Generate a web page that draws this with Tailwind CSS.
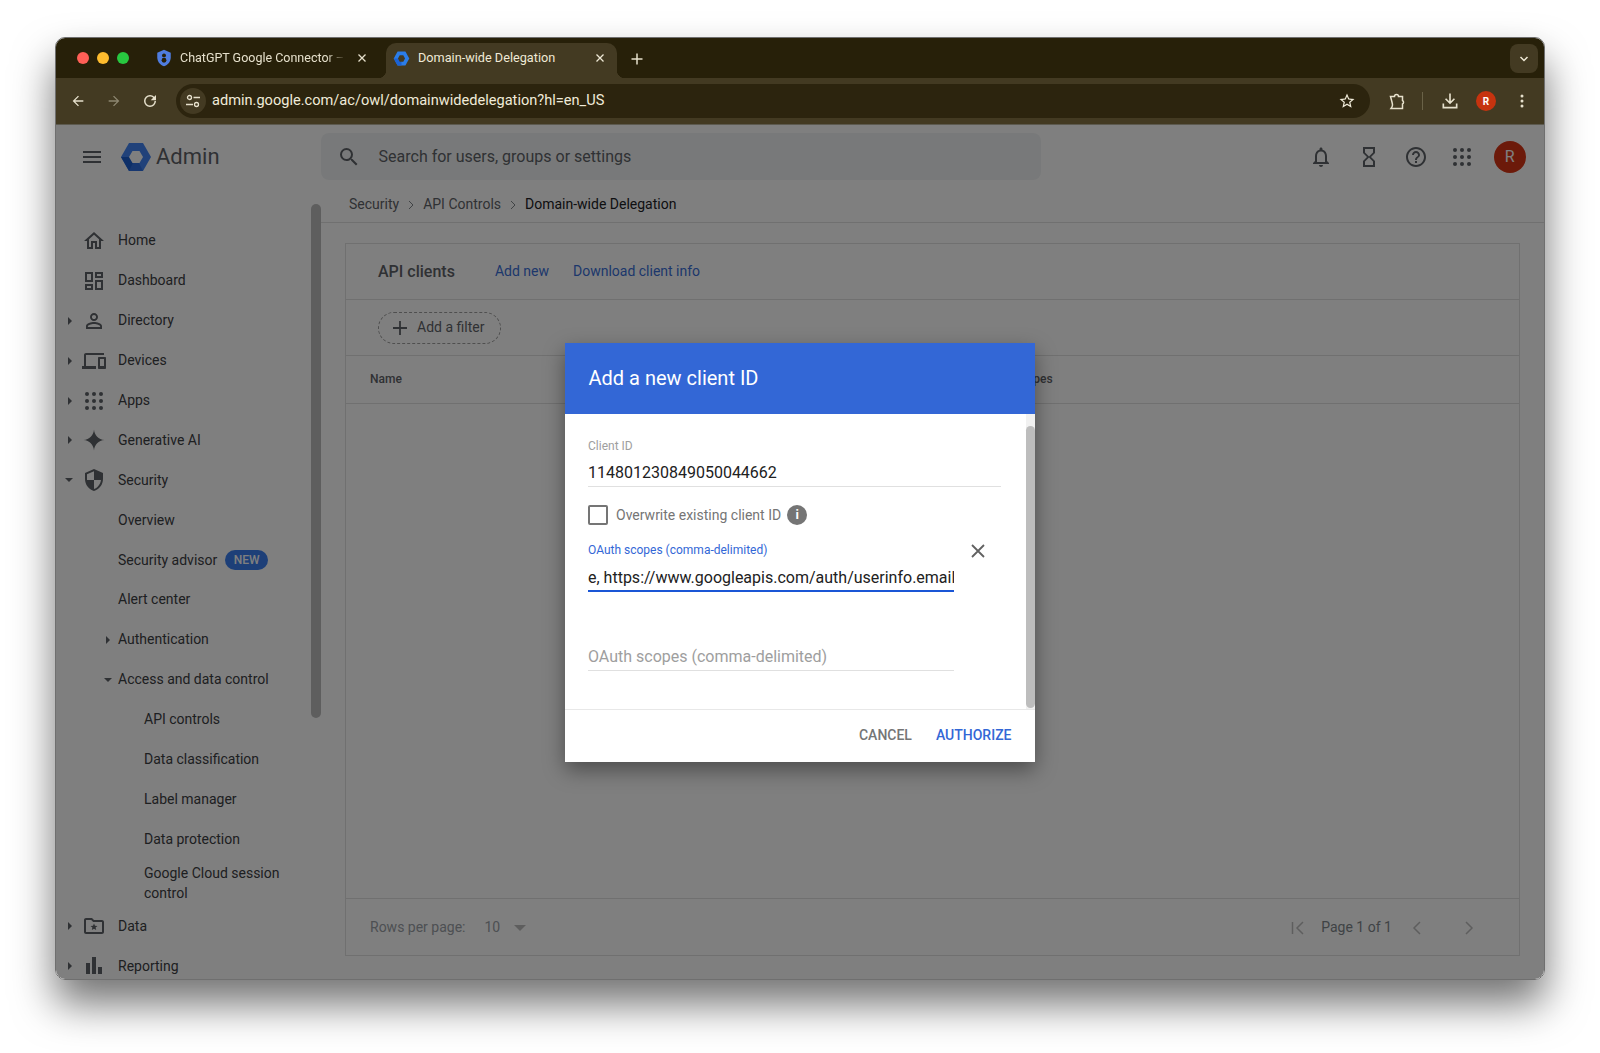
<!DOCTYPE html>
<html lang="en">
<head>
  <meta charset="UTF-8" />
  <title>Domain-wide Delegation</title>
  <script src="https://cdn.jsdelivr.net/npm/@tailwindcss/browser@4"></script>
</head>
<body class="bg-white font-['Roboto',sans-serif] h-[1053px] overflow-hidden">

  <!-- Browser window -->
  <div class="absolute left-[55px] top-[37px] w-[1490px] h-[943px] rounded-[10px] shadow-[0_24px_42px_rgba(0,0,0,0.55)]"></div>
  <div class="relative ml-[55px] mt-[37px] w-[1490px] h-[943px] rounded-[10px] overflow-hidden flex flex-col border border-[#6f6f6f]">

    <!-- Tab strip -->
    <div class="h-[40px] shrink-0 bg-[#272009] flex items-end pl-[20px] text-[12.5px] text-[#e6e0cc]">
      <div class="flex gap-[8px] items-center h-[35px] pb-[6px] w-[54px]">
        <span class="w-[12px] h-[12px] rounded-full bg-[#ff5f57] shrink-0 ml-[1px]"></span>
        <span class="w-[12px] h-[12px] rounded-full bg-[#febc2e] shrink-0"></span>
        <span class="w-[12px] h-[12px] rounded-full bg-[#28c840] shrink-0"></span>
      </div>
      <div class="flex items-center h-[35px] w-[256px] pl-[25px] pb-[5px]">
        <svg class="w-[18px] h-[18px] shrink-0" viewBox="0 0 24 24"><path fill="#4f7de0" d="M12 1L3 5v6c0 5.550 3.840 10.740 9 12 5.160-1.260 9-6.450 9-12V5l-9-4z"/><circle cx="12" cy="8.500" r="2.600" fill="#272009"/><circle cx="12" cy="15" r="3.200" fill="#272009"/></svg>
        <span class="ml-[7px] w-[166px] whitespace-nowrap [mask-image:linear-gradient(90deg,#000_88%,transparent)]">ChatGPT Google Connector –</span>
        <svg class="ml-[10px] w-[12px] h-[12px] shrink-0" viewBox="0 0 12 12"><path d="M2.500 2.500l7 7M9.500 2.500l-7 7" stroke="#e6e0cc" stroke-width="1.300"/></svg>
      </div>
      <div class="relative flex items-center h-[35px] w-[231px] pl-[7px] pb-[5px] bg-[#433a22] rounded-t-[10px]">
        <span class="absolute -left-[8px] bottom-0 w-[8px] h-[8px] bg-[radial-gradient(circle_at_0_0,transparent_8px,#433a22_8.500px)]"></span>
        <span class="absolute -right-[8px] bottom-0 w-[8px] h-[8px] bg-[radial-gradient(circle_at_100%_0,transparent_8px,#433a22_8.500px)]"></span>
        <svg class="w-[17px] h-[17px] shrink-0" viewBox="0 0 24 24"><path fill="#2b7de9" d="M6.500 2h11L23 12l-5.500 10h-11L1 12z"/><path fill="#1a62d6" d="M1 12l5.500 10h5.500v-5l-4-5z"/><path fill="#433a22" d="M9.500 7.500h5l2.500 4.500-2.500 4.500h-5L7 12z"/></svg>
        <span class="ml-[8px] w-[175px] whitespace-nowrap text-[#efe9d6] text-[12.700px]">Domain-wide Delegation</span>
        <svg class="ml-[1px] w-[12px] h-[12px] shrink-0" viewBox="0 0 12 12"><path d="M2.500 2.500l7 7M9.500 2.500l-7 7" stroke="#efe9d6" stroke-width="1.300"/></svg>
      </div>
      <svg class="ml-[13px] mb-[12px] w-[14px] h-[14px] shrink-0" viewBox="0 0 14 14"><path d="M7 1.500v11M1.500 7h11" stroke="#e6e0cc" stroke-width="1.500"/></svg>
      <div class="ml-auto mr-[6px] mb-[5px] w-[28px] h-[29px] rounded-[8px] bg-[#433a22] flex items-center justify-center">
        <svg class="w-[10px] h-[10px]" viewBox="0 0 10 10"><path d="M1.500 3l3.500 3.500L8.500 3" fill="none" stroke="#efe9d6" stroke-width="1.500"/></svg>
      </div>
    </div>

    <!-- Toolbar -->
    <div class="h-[47px] shrink-0 bg-[#433a22] border-b border-[#5d5a4f] flex items-center pl-[14px] text-[#e6e0cc]">
      <svg class="w-[16px] h-[16px]" viewBox="0 0 24 24"><path fill="#e6e0cc" d="M20 11H7.830l5.590-5.590L12 4l-8 8 8 8 1.410-1.410L7.830 13H20v-2z"/></svg>
      <svg class="ml-[20px] w-[16px] h-[16px]" viewBox="0 0 24 24"><path fill="#8d8670" d="M4 11h12.170l-5.590-5.590L12 4l8 8-8 8-1.410-1.410L16.170 13H4v-2z"/></svg>
      <svg class="ml-[19px] w-[18px] h-[18px]" viewBox="0 0 24 24"><path fill="#e6e0cc" d="M17.650 6.350A7.960 7.960 0 0012 4a8 8 0 108 8h-2a6 6 0 11-6-6c1.660 0 3.140.69 4.220 1.780L13 11h7V4l-2.350 2.350z"/></svg>
      <div class="ml-[17px] w-[1194px] h-[34px] rounded-full bg-[#2c240e] flex items-center pl-[4px] pr-[14px]">
        <div class="w-[26px] h-[26px] rounded-full bg-[#433a22] flex items-center justify-center">
          <svg class="w-[16px] h-[16px]" viewBox="0 0 16 16" fill="none" stroke="#e6e0cc" stroke-width="1.300"><circle cx="4.500" cy="4.500" r="2"/><path d="M8.500 4.500H15M1 11.500h7"/><circle cx="11.500" cy="11.500" r="2"/></svg>
        </div>
        <span class="ml-[6px] text-[14.600px] text-[#f0ebd9] whitespace-nowrap">admin.google.com/ac/owl/domainwidedelegation?hl=en_US</span>
        <svg class="ml-auto w-[18px] h-[18px]" viewBox="0 0 24 24"><path fill="#f0ebd9" d="M22 9.240l-7.190-.62L12 2 9.190 8.630 2 9.240l5.460 4.730L5.820 21 12 17.270 18.180 21l-1.630-7.030L22 9.240zM12 15.400l-3.760 2.270 1-4.280-3.320-2.880 4.380-.38L12 6.100l1.710 4.040 4.380.38-3.320 2.880 1 4.280L12 15.400z"/></svg>
      </div>
      <svg class="ml-[17px] w-[20px] h-[20px]" viewBox="0 0 20 20" fill="none" stroke="#e6e0cc" stroke-width="1.500"><path d="M3.500 5.500h4a2 2 0 014 0h4v4a2 2 0 010 3.500v4.500H4q1.500-2 1.500-3.500T3.500 5.500z"/></svg>
      <div class="ml-[15px] w-px h-[18px] bg-[#6a6248]"></div>
      <svg class="ml-[17px] w-[20px] h-[20px]" viewBox="0 0 24 24"><path fill="#e6e0cc" d="M13 3h-2v9.200L7.400 8.600 6 10l6 6 6-6-1.400-1.400-3.600 3.600V3zM3 15h2v4h14v-4h2v6H3v-6z"/></svg>
      <div class="ml-[16px] w-[20px] h-[20px] rounded-full bg-[#c6330f] flex items-center justify-center text-white text-[10px] font-bold">R</div>
      <svg class="ml-[18px] w-[16px] h-[16px]" viewBox="0 0 16 16"><circle cx="8" cy="3" r="1.500" fill="#e6e0cc"/><circle cx="8" cy="8" r="1.500" fill="#e6e0cc"/><circle cx="8" cy="13" r="1.500" fill="#e6e0cc"/></svg>
    </div>

    <!-- Admin console -->
    <div class="relative flex-1 min-h-0 flex flex-col bg-white">

      <!-- Top bar -->
      <div class="h-[66px] shrink-0 flex items-center pl-[24px] pb-[3px] text-[#5f6368]">
        <svg class="w-[24px] h-[24px]" viewBox="0 0 24 24"><path fill="#5f6368" d="M3 18h18v-2H3v2zm0-5h18v-2H3v2zm0-7v2h18V6H3z"/></svg>
        <svg class="ml-[17px] w-[30px] h-[28px]" viewBox="0 0 30 28"><path fill="#4285f4" d="M8 0h14l8 14-8 14H8L0 14z"/><path fill="#1a5fd0" d="M0 14l8 14h7v-7l-6-7z"/><path fill="#2f6fe0" d="M8 28h14l-4-8h-6z"/><path fill="#ffffff" d="M11.500 8h7l3.500 6-3.500 6h-7L8 14z"/></svg>
        <span class="ml-[5px] text-[22px] text-[#5f6368]">Admin</span>
        <div class="ml-[101px] w-[720px] h-[47px] rounded-[8px] bg-[#f1f3f4] flex items-center pl-[16px]">
          <svg class="w-[24px] h-[24px]" viewBox="0 0 24 24"><path fill="#5f6368" d="M15.500 14h-.79l-.28-.27A6.470 6.470 0 0016 9.500 6.500 6.500 0 109.500 16c1.610 0 3.090-.59 4.230-1.570l.27.28v.79l5 4.990L20.490 19l-4.990-5zm-6 0C7.010 14 5 11.990 5 9.500S7.010 5 9.500 5 14 7.010 14 9.500 11.990 14 9.500 14z"/></svg>
          <span class="ml-[18px] text-[16px] text-[#5f6368]">Search for users, groups or settings</span>
        </div>
        <svg class="ml-[268px] w-[24px] h-[24px]" viewBox="0 0 24 24"><path fill="#5f6368" d="M12 22c1.100 0 2-.9 2-2h-4c0 1.100.9 2 2 2zm6-6v-5c0-3.070-1.630-5.640-4.500-6.320V4c0-.83-.67-1.500-1.500-1.500s-1.500.67-1.500 1.500v.68C7.640 5.360 6 7.920 6 11v5l-2 2v1h16v-1l-2-2zm-2 1H8v-6c0-2.480 1.510-4.500 4-4.500s4 2.020 4 4.500v6z"/></svg>
        <svg class="ml-[24px] w-[24px] h-[24px]" viewBox="0 0 24 24"><path fill="#5f6368" d="M6 2v6h.01L6 8.010 10 12l-4 4 .01.01H6V22h12v-5.990h-.01L18 16l-4-4 4-3.990-.01-.01H18V2H6zm10 14.500V20H8v-3.500l4-4 4 4zm-4-5l-4-4V4h8v3.500l-4 4z"/></svg>
        <svg class="ml-[23px] w-[24px] h-[24px]" viewBox="0 0 24 24"><path fill="#5f6368" d="M11 18h2v-2h-2v2zm1-16C6.480 2 2 6.480 2 12s4.480 10 10 10 10-4.480 10-10S17.520 2 12 2zm0 18c-4.410 0-8-3.590-8-8s3.590-8 8-8 8 3.590 8 8-3.590 8-8 8zm0-14c-2.210 0-4 1.790-4 4h2c0-1.100.9-2 2-2s2 .9 2 2c0 2-3 1.750-3 5h2c0-2.250 3-2.500 3-5 0-2.210-1.790-4-4-4z"/></svg>
        <svg class="ml-[22px] w-[24px] h-[24px]" viewBox="0 0 24 24" fill="#5f6368"><circle cx="5" cy="5" r="2"/><circle cx="12" cy="5" r="2"/><circle cx="19" cy="5" r="2"/><circle cx="5" cy="12" r="2"/><circle cx="12" cy="12" r="2"/><circle cx="19" cy="12" r="2"/><circle cx="5" cy="19" r="2"/><circle cx="12" cy="19" r="2"/><circle cx="19" cy="19" r="2"/></svg>
        <div class="ml-[20px] w-[32px] h-[32px] rounded-full bg-[#d93515] flex items-center justify-center text-[16px] text-white">R</div>
      </div>

      <div class="flex-1 min-h-0 flex">
        <!-- Sidebar -->
        <div class="relative w-[265px] shrink-0 pt-[30px] overflow-hidden text-[14px] text-[#3c4043]">
          <div class="absolute right-0 top-[13px] w-[10px] h-[514px] rounded-full bg-[#bdbdbd]"></div>
          <div class="h-[39.900px] flex items-center pl-[20px]"><svg class="w-[24px] h-[24px] ml-[6px] mr-[12px]" viewBox="0 0 24 24"><path fill="#5f6368" d="M12 5.690l5 4.500V18h-2v-6H9v6H7v-7.810l5-4.500M12 3L2 12h3v8h6v-6h2v6h6v-8h3L12 3z"/></svg>Home</div>
          <div class="h-[39.900px] flex items-center pl-[20px]"><svg class="w-[24px] h-[24px] ml-[6px] mr-[12px]" viewBox="0 0 24 24"><path fill="#5f6368" d="M19 5v2h-4V5h4M9 5v6H5V5h4m10 8v6h-4v-6h4M9 17v2H5v-2h4M21 3h-8v6h8V3zM11 3H3v10h8V3zm10 8h-8v10h8V11zm-10 4H3v6h8v-6z"/></svg>Dashboard</div>
          <div class="h-[39.900px] flex items-center pl-[11px]"><svg class="w-[6px] h-[8px]" viewBox="0 0 6 8"><path fill="#5f6368" d="M1 0l4 4-4 4z"/></svg><svg class="w-[24px] h-[24px] ml-[9px] mr-[12px]" viewBox="0 0 24 24"><path fill="#5f6368" d="M12 5.900c1.160 0 2.100.94 2.100 2.100s-.94 2.100-2.100 2.100S9.900 9.160 9.900 8s.94-2.100 2.100-2.100m0 9c2.970 0 6.100 1.460 6.100 2.100v1.100H5.900V17c0-.64 3.130-2.100 6.100-2.100M12 4C9.790 4 8 5.790 8 8s1.790 4 4 4 4-1.790 4-4-1.790-4-4-4zm0 9c-2.670 0-8 1.340-8 4v3h16v-3c0-2.660-5.330-4-8-4z"/></svg>Directory</div>
          <div class="h-[39.900px] flex items-center pl-[11px]"><svg class="w-[6px] h-[8px]" viewBox="0 0 6 8"><path fill="#5f6368" d="M1 0l4 4-4 4z"/></svg><svg class="w-[24px] h-[24px] ml-[9px] mr-[12px]" viewBox="0 0 24 24"><path fill="#5f6368" d="M4 6h18V4H4c-1.100 0-2 .9-2 2v11H0v3h14v-3H4V6zm19 2h-6c-.55 0-1 .45-1 1v10c0 .55.45 1 1 1h6c.55 0 1-.45 1-1V9c0-.55-.45-1-1-1zm-1 9h-4v-7h4v7z"/></svg>Devices</div>
          <div class="h-[39.900px] flex items-center pl-[11px]"><svg class="w-[6px] h-[8px]" viewBox="0 0 6 8"><path fill="#5f6368" d="M1 0l4 4-4 4z"/></svg><svg class="w-[24px] h-[24px] ml-[9px] mr-[12px]" viewBox="0 0 24 24" fill="#5f6368"><circle cx="5" cy="5" r="2"/><circle cx="12" cy="5" r="2"/><circle cx="19" cy="5" r="2"/><circle cx="5" cy="12" r="2"/><circle cx="12" cy="12" r="2"/><circle cx="19" cy="12" r="2"/><circle cx="5" cy="19" r="2"/><circle cx="12" cy="19" r="2"/><circle cx="19" cy="19" r="2"/></svg>Apps</div>
          <div class="h-[39.900px] flex items-center pl-[11px]"><svg class="w-[6px] h-[8px]" viewBox="0 0 6 8"><path fill="#5f6368" d="M1 0l4 4-4 4z"/></svg><svg class="w-[24px] h-[24px] ml-[9px] mr-[12px]" viewBox="0 0 24 24"><path fill="#5f6368" d="M12 1.500c.5 6 4.500 10 10.500 10.500-6 .5-10 4.500-10.500 10.500-.5-6-4.500-10-10.500-10.500 6-.5 10-4.500 10.500-10.500z"/></svg>Generative AI</div>
          <div class="h-[39.900px] flex items-center pl-[9px]"><svg class="w-[8px] h-[6px]" viewBox="0 0 8 6"><path fill="#5f6368" d="M0 1l4 4 4-4z"/></svg><svg class="w-[24px] h-[24px] ml-[9px] mr-[12px]" viewBox="0 0 24 24"><path fill="#5f6368" d="M12 1L3 5v6c0 5.550 3.840 10.740 9 12 5.160-1.260 9-6.450 9-12V5l-9-4zm0 10.990h7c-.53 4.120-3.280 7.790-7 8.940V12H5V6.300l7-3.110v8.800z"/></svg>Security</div>
          <div class="h-[39.900px] flex items-center pl-[62px]">Overview</div>
          <div class="h-[39.900px] flex items-center pl-[62px]">Security advisor<span class="ml-[8px] w-[43px] h-[20px] rounded-full bg-[#3a7ff0] flex items-center justify-center text-[12px] font-medium text-white">NEW</span></div>
          <div class="h-[39.900px] flex items-center pl-[62px]">Alert center</div>
          <div class="h-[39.900px] flex items-center pl-[49px]"><svg class="w-[6px] h-[8px] mr-[7px]" viewBox="0 0 6 8"><path fill="#5f6368" d="M1 0l4 4-4 4z"/></svg>Authentication</div>
          <div class="h-[39.900px] flex items-center pl-[48px]"><svg class="w-[8px] h-[6px] mr-[6px]" viewBox="0 0 8 6"><path fill="#5f6368" d="M0 1l4 4 4-4z"/></svg>Access and data control</div>
          <div class="h-[39.900px] flex items-center pl-[88px]">API controls</div>
          <div class="h-[39.900px] flex items-center pl-[88px]">Data classification</div>
          <div class="h-[39.900px] flex items-center pl-[88px]">Label manager</div>
          <div class="h-[39.900px] flex items-center pl-[88px]">Data protection</div>
          <div class="h-[47px] flex items-center pl-[88px] leading-[20px]"><span>Google Cloud session<br>control</span></div>
          <div class="h-[39.900px] flex items-center pl-[11px]"><svg class="w-[6px] h-[8px]" viewBox="0 0 6 8"><path fill="#5f6368" d="M1 0l4 4-4 4z"/></svg><svg class="w-[24px] h-[24px] ml-[9px] mr-[12px]" viewBox="0 0 24 24"><path fill="#5f6368" d="M20 6h-8l-2-2H4c-1.100 0-2 .9-2 2v12c0 1.100.9 2 2 2h16c1.100 0 2-.9 2-2V8c0-1.100-.9-2-2-2zm0 12H4V6h5.170l2 2H20v10z"/><path fill="#5f6368" d="M12 9.500l1 2.300 2.500.2-1.900 1.600.6 2.400-2.200-1.300-2.200 1.300.6-2.400L8.500 12l2.500-.2z"/></svg>Data</div>
          <div class="h-[39.900px] flex items-center pl-[11px]"><svg class="w-[6px] h-[8px]" viewBox="0 0 6 8"><path fill="#5f6368" d="M1 0l4 4-4 4z"/></svg><svg class="w-[24px] h-[24px] ml-[9px] mr-[12px]" viewBox="0 0 24 24"><path fill="#5f6368" d="M4 9h4v11H4zM10 3h4v17h-4zM16 13h4v7h-4z"/></svg>Reporting</div>
        </div>

        <!-- Main column -->
        <div class="flex-1 min-w-0 flex flex-col">
          <div class="h-[32px] shrink-0 border-b border-[#e0e0e0] flex items-center pl-[28px] pb-[4px] text-[14px] text-[#5f6368]">
            <span>Security</span>
            <svg class="mx-[8px] w-[8px] h-[10px]" viewBox="0 0 8 10"><path d="M2 1l4 4-4 4" fill="none" stroke="#80868b" stroke-width="1"/></svg>
            <span>API Controls</span>
            <svg class="mx-[8px] w-[8px] h-[10px]" viewBox="0 0 8 10"><path d="M2 1l4 4-4 4" fill="none" stroke="#80868b" stroke-width="1"/></svg>
            <span class="text-[#202124]">Domain-wide Delegation</span>
          </div>
          <div class="flex-1 min-h-0 pl-[24px] pr-[24px] pt-[20px] pb-[23px]">
            <div class="h-full border border-[#e0e0e0] flex flex-col">
              <div class="h-[56px] shrink-0 border-b border-[#e0e0e0] flex items-center pl-[32px] text-[14px] text-[#3a6fd8]">
                <span class="text-[16px] text-[#5f6368] font-medium">API clients</span>
                <span class="ml-[40px]">Add new</span>
                <span class="ml-[24px]">Download client info</span>
              </div>
              <div class="h-[56px] shrink-0 border-b border-[#e0e0e0] flex items-center pl-[32px]">
                <div class="w-[123px] h-[32px] rounded-full border border-dashed border-[#9e9e9e] flex items-center pl-[12px] text-[14px] text-[#5f6368]">
                  <svg class="w-[18px] h-[18px]" viewBox="0 0 18 18"><path d="M9 2v14M2 9h14" stroke="#5f6368" stroke-width="1.800"/></svg>
                  <span class="ml-[8px]">Add a filter</span>
                </div>
              </div>
              <div class="relative h-[48px] shrink-0 border-b border-[#e0e0e0] flex items-center pl-[24px] pb-[1px] text-[12px] font-medium text-[#5f6368]">
                <span>Name</span>
                <span class="absolute left-[667px]">Scopes</span>
              </div>
              <div class="flex-1"></div>
              <div class="h-[57px] shrink-0 border-t border-[#e0e0e0] flex items-center pl-[24px] pt-[1px] text-[14px] text-[#9aa0a6]">
                <span>Rows per page:</span>
                <span class="ml-[19px]">10</span>
                <svg class="ml-[14px] w-[12px] h-[6px]" viewBox="0 0 12 6"><path fill="#bdbdbd" d="M0 0h12L6 6z"/></svg>
                <svg class="ml-[764px] w-[16px] h-[16px]" viewBox="0 0 16 16"><path d="M2.500 2v12M13 2L7 8l6 6" fill="none" stroke="#bdbdbd" stroke-width="1.500"/></svg>
                <span class="ml-[15px] text-[#80868b]">Page 1 of 1</span>
                <svg class="ml-[17px] w-[16px] h-[16px]" viewBox="0 0 16 16"><path d="M11 2L5 8l6 6" fill="none" stroke="#bdbdbd" stroke-width="1.500"/></svg>
                <svg class="ml-[36px] w-[16px] h-[16px]" viewBox="0 0 16 16"><path d="M5 2l6 6-6 6" fill="none" stroke="#bdbdbd" stroke-width="1.500"/></svg>
              </div>
            </div>
          </div>
        </div>
      </div>

      <!-- Scrim -->
      <div class="absolute inset-0 bg-black/50"></div>

      <!-- Dialog -->
      <div class="absolute left-[509px] top-[218px] w-[470px] h-[419px] bg-white flex flex-col shadow-[0_8px_20px_rgba(0,0,0,0.4)]">
        <div class="h-[71px] shrink-0 bg-[#3367d6] flex items-center pl-[23.500px] pb-[2px] text-[20px] text-white">Add a new client ID</div>
        <div class="relative flex-1 min-h-0 pl-[23px] pt-[24px]">
          <div class="absolute right-0 top-0 bottom-0 w-[9px] bg-[#f1f1f1]"><div class="mt-[12px] h-[282px] rounded-full bg-[#bdbdbd]"></div></div>
          <div class="text-[12px] leading-[16px] text-[#9e9e9e]">Client ID</div>
          <div class="mt-[8px] w-[413px] h-[25px] border-b border-[#e0e0e0] text-[16px] leading-[22px] text-[#212121]">114801230849050044662</div>
          <div class="mt-[18px] flex items-center h-[20px]">
            <span class="w-[20px] h-[20px] rounded-[2px] border-2 border-[#757575]"></span>
            <span class="ml-[8px] text-[14px] text-[#757575]">Overwrite existing client ID</span>
            <span class="ml-[6px] w-[20px] h-[20px] rounded-full bg-[#757575] flex items-center justify-center text-[13px] font-bold text-white">i</span>
          </div>
          <div class="mt-[17px] w-[413px] flex items-start justify-between">
            <div class="w-[366px]">
              <div class="text-[12px] leading-[16px] text-[#3367d6]">OAuth scopes (comma-delimited)</div>
              <div class="mt-[9px] h-[25px] overflow-hidden border-b-2 border-[#1a56d6] text-[16px] leading-[22px] text-[#212121] whitespace-nowrap">e, https://www.googleapis.com/auth/userinfo.email</div>
            </div>
            <svg class="mr-[13px] mt-[-1px] w-[20px] h-[20px]" viewBox="0 0 20 20"><path d="M4 4l12 12M16 4L4 16" stroke="#616161" stroke-width="1.800"/></svg>
          </div>
          <div class="mt-[54px] w-[366px] h-[25px] border-b border-[#e0e0e0] text-[16px] leading-[22px] text-[#9e9e9e]">OAuth scopes (comma-delimited)</div>
        </div>
        <div class="h-[53px] shrink-0 border-t border-[#e8e8e8] flex items-center justify-end pr-[23.500px] pb-[2px] text-[14px] font-medium">
          <span class="text-[#757575]">CANCEL</span>
          <span class="ml-[24px] text-[#3367d6]">AUTHORIZE</span>
        </div>
      </div>
    </div>
  </div>
</body>
</html>
